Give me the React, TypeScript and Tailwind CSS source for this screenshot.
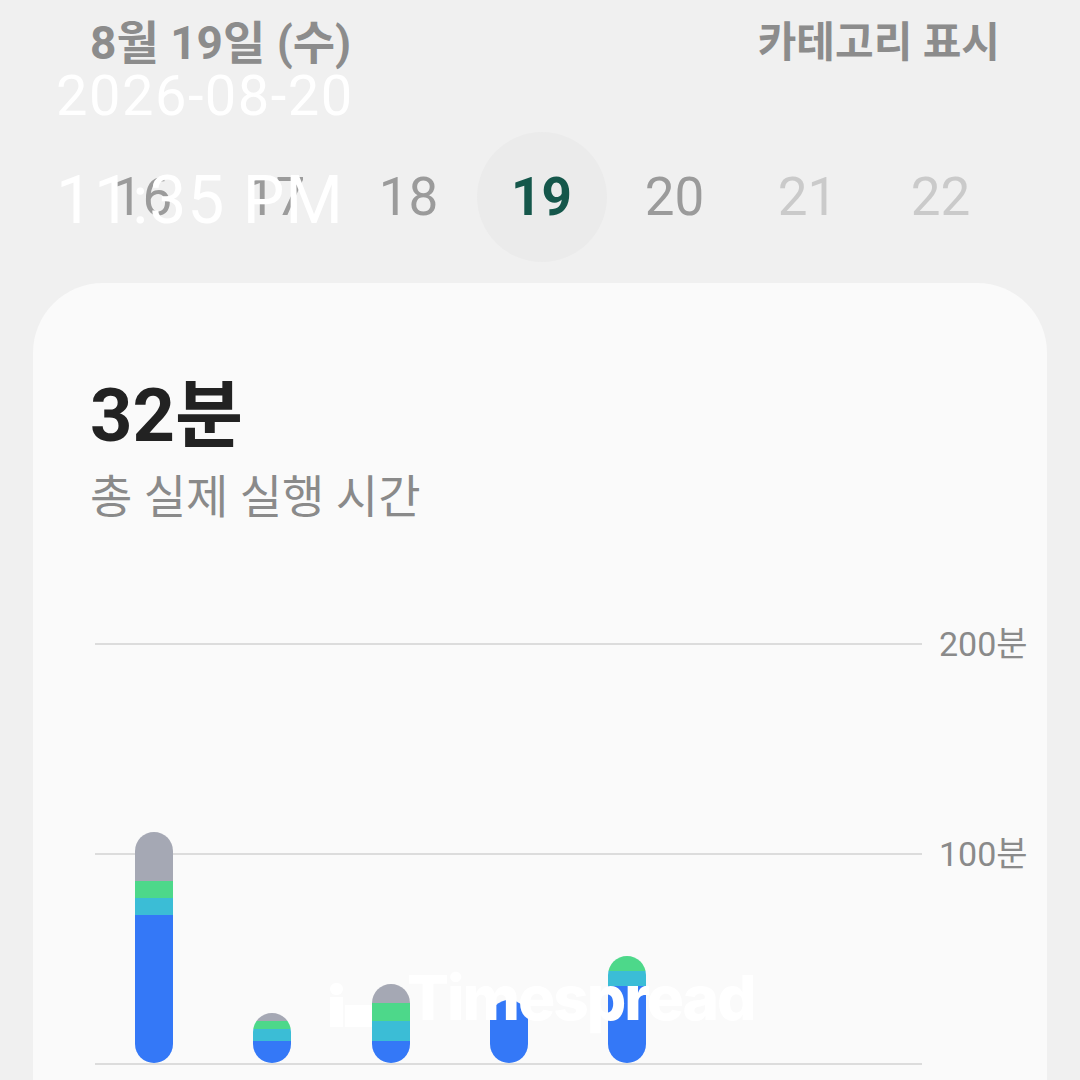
const FONT = "font-['Roboto','Noto_Sans_CJK_KR',sans-serif]";

type Seg = { color: string; h: number };

const bars: Seg[][] = [
  [
    { color: "bg-[#a5a8b4]", h: 49 },
    { color: "bg-[#4dd88a]", h: 17 },
    { color: "bg-[#3bbdd6]", h: 17 },
    { color: "bg-[#3478f7]", h: 148 },
  ],
  [
    { color: "bg-[#a5a8b4]", h: 8 },
    { color: "bg-[#4dd88a]", h: 8 },
    { color: "bg-[#3bbdd6]", h: 12 },
    { color: "bg-[#3478f7]", h: 22 },
  ],
  [
    { color: "bg-[#a5a8b4]", h: 19 },
    { color: "bg-[#4dd88a]", h: 18 },
    { color: "bg-[#3bbdd6]", h: 20 },
    { color: "bg-[#3478f7]", h: 22 },
  ],
  [{ color: "bg-[#3478f7]", h: 63 }],
  [
    { color: "bg-[#4dd88a]", h: 15 },
    { color: "bg-[#3bbdd6]", h: 15 },
    { color: "bg-[#3478f7]", h: 77 },
  ],
];

const days = [
  { d: "16", cls: "text-[#9b9b9b]" },
  { d: "17", cls: "text-[#9b9b9b]" },
  { d: "18", cls: "text-[#9b9b9b]" },
  { d: "19", cls: "text-[#15574b] font-bold", active: true },
  { d: "20", cls: "text-[#9b9b9b]" },
  { d: "21", cls: "text-[#cacaca]" },
  { d: "22", cls: "text-[#cacaca]" },
];

function GridRow({ label }: { label?: string }) {
  return (
    <div className="flex h-[30px] items-center">
      <div className="ml-[62px] h-[2px] w-[827px] bg-[#dcdcdc]" />
      {label && (
        <span className="ml-[17px] text-[34px] leading-none text-[#8a8a8a]">{label}</span>
      )}
    </div>
  );
}

export default function App() {
  return (
    <div className={`${FONT} relative h-[1080px] w-[1080px] overflow-hidden bg-[#f0f0f0]`}>
      {/* header */}
      <div className="flex h-[86px] items-center justify-between pl-[90px] pr-[80px] font-bold text-[#8c8c8c]">
        <span className="text-[46px] leading-none">8월 19일 (수)</span>
        <span className="text-[42px] leading-none">카테고리 표시</span>
      </div>

      {/* day strip */}
      <div className="mt-[46px] flex pl-[76px]">
        {days.map((x) => (
          <div key={x.d} className="flex h-[130px] w-[133px] items-center justify-center">
            <div
              className={`flex h-[130px] w-[130px] items-center justify-center rounded-full ${
                x.active ? "bg-[#ebebeb]" : ""
              }`}
            >
              <span className={`text-[53px] leading-none ${x.cls}`}>{x.d}</span>
            </div>
          </div>
        ))}
      </div>

      {/* card */}
      <div className="mx-[33px] mt-[21px] h-[900px] rounded-t-[70px] bg-[#fafafa] pl-[57px] pt-[96px]">
        <div className="text-[74px] font-bold leading-none text-[#222222]">32분</div>
        <div className="mt-[21px] text-[46px] leading-none text-[#8a8a8a]">총 실제 실행 시간</div>

        <div className="relative mt-[109px] ml-[-57px]">
          <GridRow label="200분" />
          <div className="mt-[180px]">
            <GridRow label="100분" />
          </div>
          <div className="mt-[180px]">
            <GridRow />
          </div>
          {/* bars sit on the baseline */}
          <div className="absolute bottom-[16px] left-[102px] flex items-end gap-[80.3px]">
            {bars.map((segs, i) => (
              <div key={i} className="flex w-[38px] flex-col overflow-hidden rounded-full">
                {segs.map((s, j) => (
                  <div key={j} className={s.color} style={{ height: s.h }} />
                ))}
              </div>
            ))}
          </div>
        </div>
      </div>

      {/* timestamp overlay */}
      <div className="absolute left-[56px] top-[68px] font-['Roboto',sans-serif] text-white">
        <div className="text-[56px] leading-none tracking-[1.5px]">2026-08-20</div>
        <div className="mt-[44px] text-[66px] leading-none tracking-[1px]">11:35 PM</div>
      </div>

      {/* watermark */}
      <div className="absolute left-[330px] top-[967px] flex items-end font-['Inter',sans-serif] font-extrabold text-white">
        <div className="mb-[2px] flex flex-col items-center">
          <div className="h-[12px] w-[13px] rounded-full bg-white" />
          <div className="mt-[2px] h-[30px] w-[13px] bg-white" />
        </div>
        <div className="mb-[2px] ml-[2px] h-[22px] w-[27px] bg-white" />
        <span className="ml-[35px] text-[62px] leading-none tracking-[-2px]">Timespread</span>
      </div>
    </div>
  );
}
